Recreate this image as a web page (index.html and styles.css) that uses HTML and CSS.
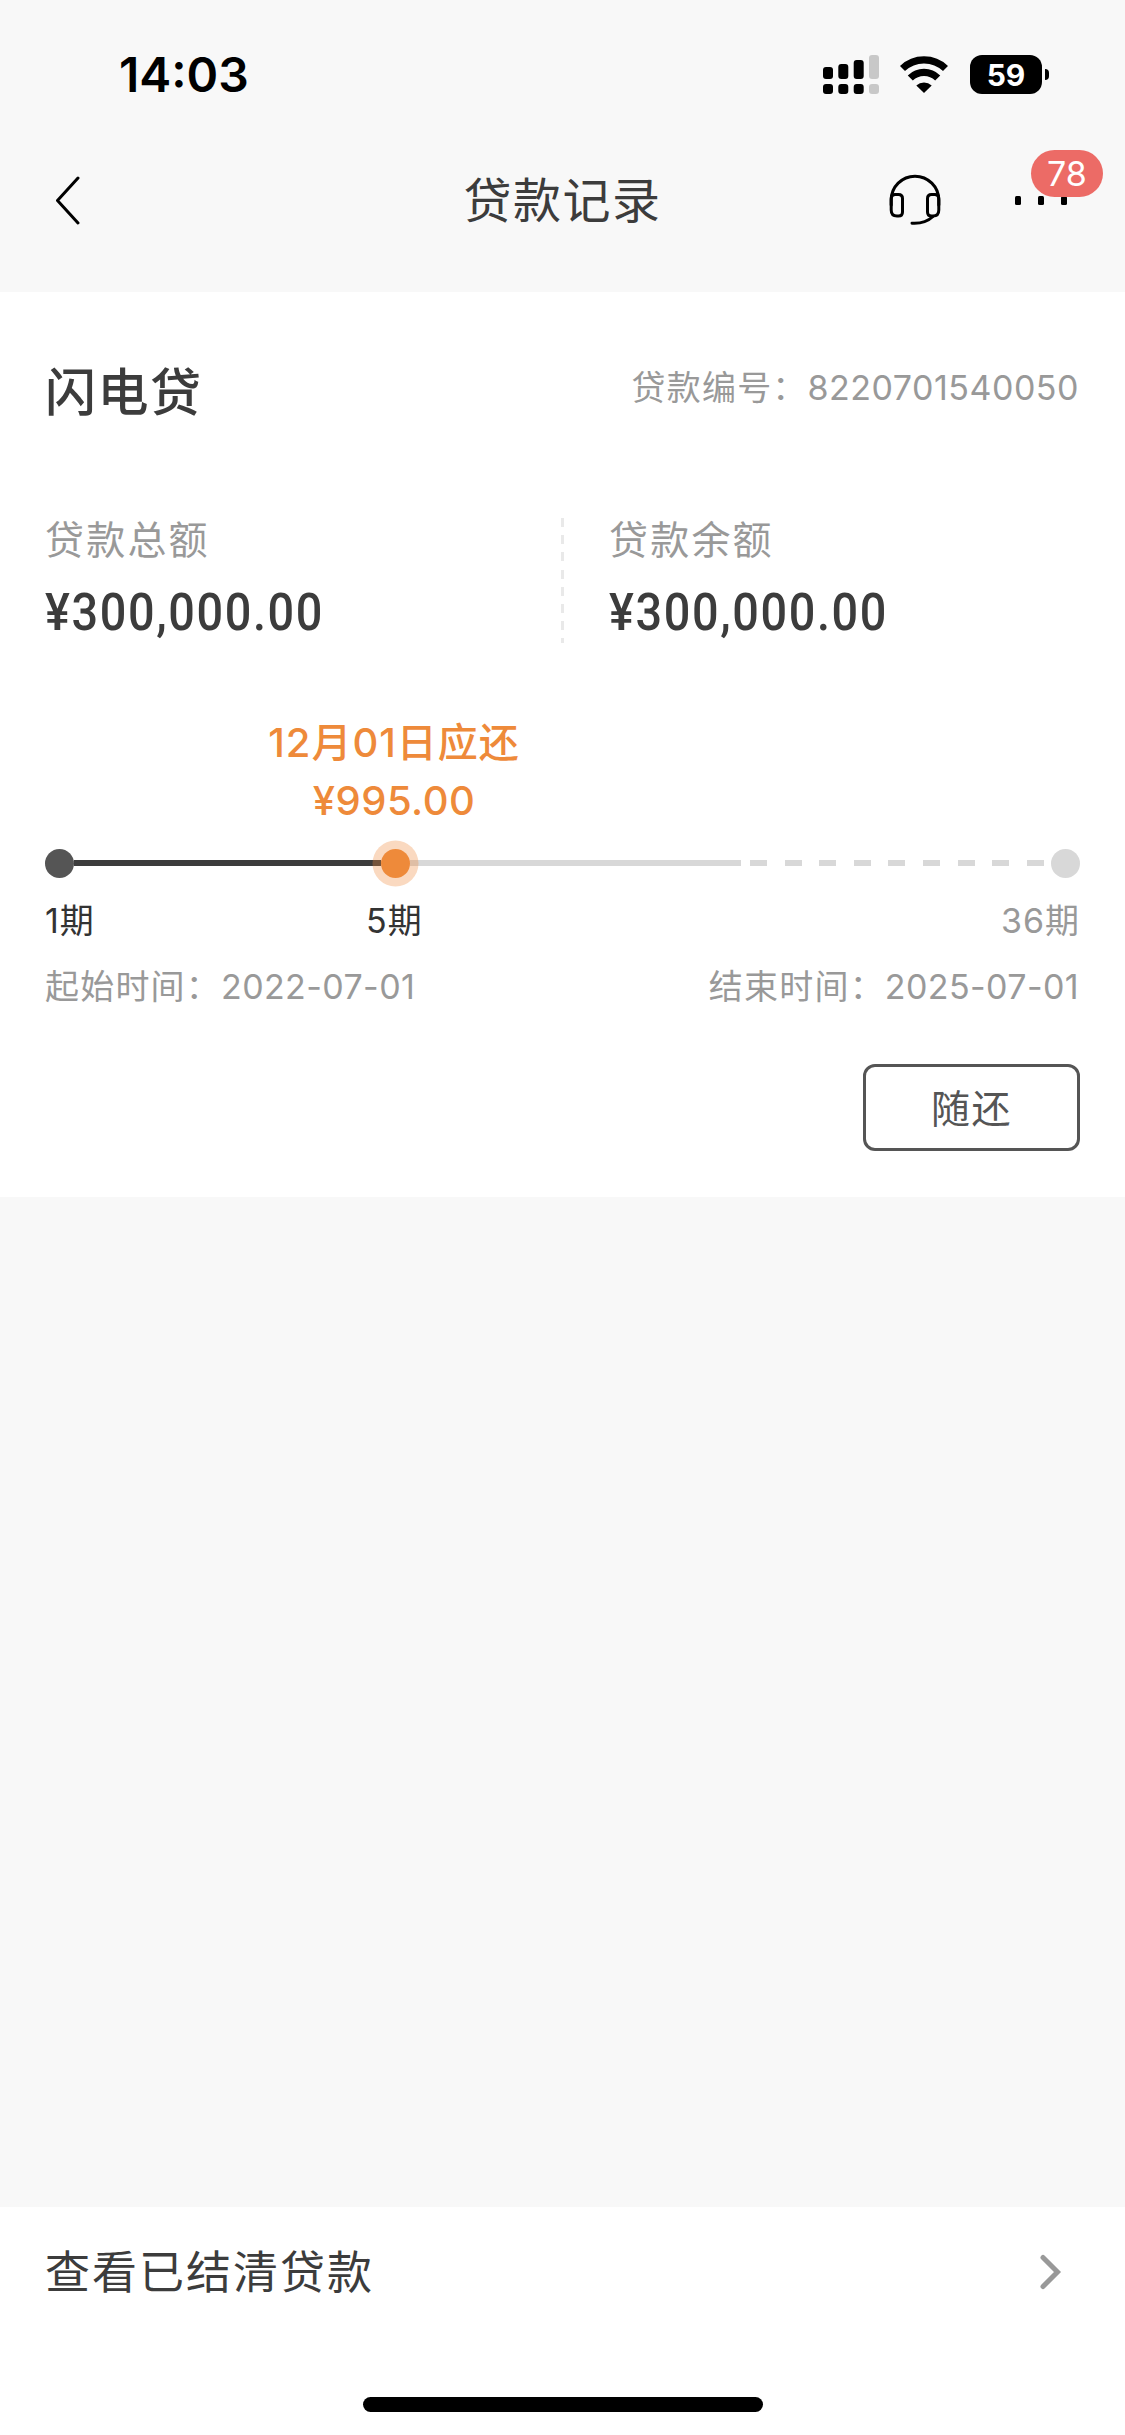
FILE: index.html
```html
<!DOCTYPE html>
<html lang="zh-CN">
<head>
<meta charset="utf-8">
<title>贷款记录</title>
<link rel="stylesheet" href="styles.css">
</head>
<body>
<div class="screen">
  <header class="top">
    <div class="status">
      <span class="clock">14:03</span>
      <div class="status-icons">
        <svg class="signal" width="56" height="40" viewBox="0 0 56 40">
          <rect x="0" y="12" width="10" height="12" rx="3"/><rect x="15.3" y="9" width="10" height="15" rx="3"/><rect x="30.7" y="5" width="10" height="19" rx="3"/><rect class="dim" x="46" y="0" width="10" height="24" rx="3"/>
          <rect x="0" y="29" width="10" height="10" rx="3"/><rect x="15.3" y="29" width="10" height="10" rx="3"/><rect x="30.7" y="29" width="10" height="10" rx="3"/><rect class="dim" x="46" y="29" width="10" height="10" rx="3"/>
        </svg>
        <svg class="wifi" width="50" height="40" viewBox="0 0 50 40">
          <path class="arc" d="M3.500 13.500A31 31 0 0 1 46.500 13.500"/>
          <path class="arc" d="M11.300 23A19.500 19.500 0 0 1 38.700 23"/>
          <path d="M17.300 30.500a11.500 11.500 0 0 1 15.400 0L25 38z"/>
        </svg>
        <div class="battery">59<span class="nub"></span></div>
      </div>
    </div>
    <nav class="nav">
      <svg class="back" width="28" height="50" viewBox="0 0 28 50"><path d="M25 3L4.500 25.500L25 48"/></svg>
      <h1 class="title">贷款记录</h1>
      <div class="actions">
        <svg class="headset" width="52" height="52" viewBox="0 0 52 52">
          <path d="M2.200 31V26a23.800 23.800 0 0 1 47.600 0v5"/>
          <path d="M2.200 24.500Q2.200 20.500 6 20.500h3.500q4 0 4 4V38q0 4-4 4H8q-5.800 0-5.800-6z"/>
          <path d="M49.800 24.500q0-4-3.800-4h-3.500q-4 0-4 4V38q0 4 4 4H44q5.800 0 5.800-6z"/>
          <path d="M44 42.500Q36 50 23 49.200"/>
        </svg>
        <div class="more">
          <i></i><i></i><i></i>
          <span class="badge">78</span>
        </div>
      </div>
    </nav>
  </header>

  <section class="loan">
    <div class="loan-head">
      <h2 class="loan-name">闪电贷</h2>
      <span class="meta">贷款编号：<span class="num">8220701540050</span></span>
    </div>
    <div class="amounts">
      <div class="amount"><div class="label">贷款总额</div><div class="value">¥300,000.00</div></div>
      <div class="amount second"><div class="label">贷款余额</div><div class="value">¥300,000.00</div></div>
    </div>
    <div class="due"><div>12月01日应还</div><div class="num">¥995.00</div></div>
    <div class="track">
      <span class="dot start"></span><span class="line done"></span><span class="dot now"></span><span class="line rest"></span><span class="line dashed"></span><span class="dot end"></span>
    </div>
    <div class="terms"><span>1期</span><span>5期</span><span class="last">36期</span></div>
    <div class="dates"><span class="meta">起始时间：<span class="num">2022-07-01</span></span><span class="meta">结束时间：<span class="num">2025-07-01</span></span></div>
    <button class="repay">随还</button>
  </section>

  <footer class="bottom">
    <a class="settled"><span class="settled-text">查看已结清贷款</span>
      <svg class="chevron" width="22" height="36" viewBox="0 0 22 36"><path d="M3 3.500L17.500 18L3 32.500"/></svg>
    </a>
    <div class="home"></div>
  </footer>
</div>
</body>
</html>
```
FILE: styles.css
```css
* { box-sizing: border-box; margin: 0; padding: 0; }
body { background: #f8f8f8; font-family: Inter, "Noto Sans CJK SC", sans-serif; color: #3c3c3c; }
.screen { width: 1125px; height: 2435px; display: flex; flex-direction: column; background: #f8f8f8; overflow: hidden; }
h1, h2 { font-weight: 400; }

/* status bar and navigation */
.top { height: 292px; flex: none; color: #000; }
.status { height: 150px; display: flex; justify-content: space-between; padding: 0 83px 0 119px; }
.clock { font-size: 48px; font-weight: 600; line-height: 60px; padding-top: 45px; }
.status-icons { display: flex; height: 40px; margin-top: 55px; }
.signal .dim { fill: #c8c8c8; }
.wifi { margin: 0 21px 0 20px; }
.wifi .arc { fill: none; stroke: #000; stroke-width: 7.200; }
.battery { position: relative; width: 72px; height: 39px; border-radius: 12px; background: #000; color: #fff; font-size: 30px; font-weight: 700; line-height: 40px; text-align: center; }
.nub { position: absolute; left: 75px; top: 14px; width: 4px; height: 11px; border-radius: 0 4px 4px 0; background: #000; }

.nav { height: 100px; display: grid; grid-template-columns: 1fr auto 1fr; align-items: center; }
.back { margin-left: 53px; fill: none; stroke: #000; stroke-width: 3; stroke-linecap: round; stroke-linejoin: round; }
.title { font-size: 48px; line-height: 72px; padding-top: 2px; letter-spacing: 1.500px; color: #3c3c3c; }
.actions { display: flex; justify-content: flex-end; align-items: center; gap: 74px; padding-right: 58px; }
.headset { fill: none; stroke: #000; stroke-width: 3; stroke-linecap: round; }
.more { position: relative; display: flex; gap: 17px; }
.more i { width: 6px; height: 9px; border-radius: 1.500px; background: #000; }
.badge { position: absolute; left: 16px; top: -46px; width: 72px; height: 47px; border-radius: 24px; background: #ec6b66; color: #fff; font-size: 34px; line-height: 47px; text-align: center; }

/* loan card */
.loan { flex: none; height: 905px; padding: 0 45px; background: #fff; display: flex; flex-direction: column; }
.loan-head { display: flex; justify-content: space-between; padding-top: 62px; height: 226px; }
.loan-name { font-size: 51px; font-weight: 500; line-height: 78px; letter-spacing: 1.500px; }
.meta { color: #999; letter-spacing: 1.200px; font-size: 34px; }
.num { letter-spacing: 0.500px; }
.loan-head .meta { line-height: 67px; padding-right: 1px; }
.amounts { display: grid; grid-template-columns: 516px 1fr; height: 124px; }
.amount.second { padding-left: 48px; background: repeating-linear-gradient(#e9e9e9 0 9px, transparent 9px 17.200px) left / 3px 100% no-repeat; }
.label { font-size: 39px; line-height: 44px; letter-spacing: 2.200px; color: #999; }
.value { font-family: Roboto, sans-serif; font-size: 52px; font-weight: 500; line-height: 60px; padding-top: 21px; white-space: nowrap; letter-spacing: 1.800px; transform: scaleX(0.900); transform-origin: left; }
.due { width: 300px; margin: 72px 0 0 199px; font-size: 40px; line-height: 58px; font-weight: 500; letter-spacing: 1px; color: #ee8a3a; text-align: center; }
.track { display: flex; align-items: center; height: 46px; margin-top: 10px; }
.dot { flex: none; width: 29px; height: 29px; border-radius: 50%; background: #555; }
.dot.now { background: #ee8a3a; box-shadow: 0 0 0 8.500px rgba(238,138,58,.32); position: relative; }
.dot.end { background: #d8d8d8; }
.line { height: 6px; }
.done { width: 307px; background: #3c3c3c; }
.rest { width: 331px; background: #d8d8d8; }
.dashed { width: 310px; background: repeating-linear-gradient(90deg, transparent 0 9px, #d8d8d8 9px 26px, transparent 26px 34.600px); }
.terms { display: grid; grid-template-columns: 321px auto 1fr; font-size: 34px; line-height: 50px; margin-top: 10px; letter-spacing: 1px; color: #333; }
.terms .last { color: #999; text-align: right; }
.dates { display: flex; justify-content: space-between; line-height: 50px; margin-top: 16px; }
.dates .num { letter-spacing: 0.400px; margin-right: 1px; }
.repay { align-self: flex-end; width: 217px; height: 87px; margin-top: 52px; padding-bottom: 4px; border: 3px solid #555; border-radius: 12px; background: #fff; color: #555; font: inherit; font-size: 39px; letter-spacing: 1.500px; }

/* bottom bar */
.bottom { flex: none; height: 228px; margin-top: auto; background: #fff; }
.settled { display: flex; justify-content: space-between; align-items: center; height: 130px; padding: 0 63px 0 45px; font-size: 45px; letter-spacing: 2px; }
.settled-text { padding-bottom: 5px; }
.chevron { fill: none; stroke: #999; stroke-width: 5; stroke-linecap: round; }
.home { width: 400px; height: 15px; margin: 60px auto 0; border-radius: 8px; background: #000; }
```
